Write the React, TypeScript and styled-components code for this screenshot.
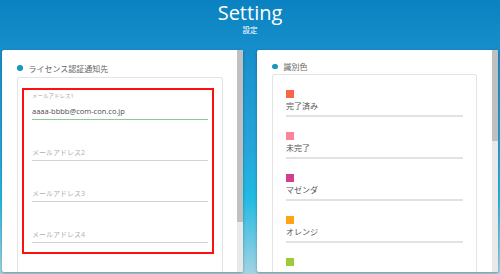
import React from 'react'
import styled, { createGlobalStyle } from 'styled-components'

const GlobalStyle = createGlobalStyle`
	html, body {
		margin: 0;
		padding: 0;
	}
	body {
		font-family: 'Open Sans', 'Noto Sans CJK JP', sans-serif;
		background: #1b90cc;
	}
`

const emails = [
	{ label: 'メールアドレス1', value: 'aaaa-bbbb@com-con.co.jp' },
	{ label: 'メールアドレス2', value: '' },
	{ label: 'メールアドレス3', value: '' },
	{ label: 'メールアドレス4', value: '' },
]

// the last entry's name sits below the fold, only its swatch shows
const colors = [
	{ name: '完了済み', color: '#fa6648' },
	{ name: '未完了', color: '#fb8497' },
	{ name: 'マゼンダ', color: '#d33f8c' },
	{ name: 'オレンジ', color: '#fda515' },
	{ name: '', color: '#9dcb3c' },
]

export default function App() {
	return (
		<Page>
			<GlobalStyle />
			<Header>
				<Title>Setting</Title>
				<SubTitle>設定</SubTitle>
			</Header>
			<Cards>
				<Card>
					<CardBody $padRight={14}>
						<SectionTitle>ライセンス認証通知先</SectionTitle>
						<InnerBox>
							<Highlight>
								{emails.map((e, i) => (
									<Field key={i} $first={i === 0} $active={!!e.value}>
										<FieldLabel>{e.value ? e.label : ''}</FieldLabel>
										<FieldInput
											readOnly
											defaultValue={e.value}
											placeholder={e.label}
										/>
									</Field>
								))}
							</Highlight>
						</InnerBox>
					</CardBody>
					<ScrollTrack>
						<ScrollThumb $height={172} />
					</ScrollTrack>
				</Card>
				<Card>
					<CardBody $padRight={15}>
						<SectionTitle>識別色</SectionTitle>
						<InnerBox $padX={13}>
							{colors.map((c, i) => (
								<ColorItem key={i}>
									<Swatch $color={c.color} />
									<ColorName>{c.name}</ColorName>
								</ColorItem>
							))}
						</InnerBox>
					</CardBody>
					<ScrollTrack>
						<ScrollThumb $height={91} />
					</ScrollTrack>
				</Card>
			</Cards>
		</Page>
	)
}

const Page = styled.div`
	width: 500px;
	height: 274px;
	overflow: hidden;
	background: linear-gradient(
		to bottom,
		#0a82c1 0%,
		#1b93cf 25%,
		#25a6db 55%,
		#21bae2 72%,
		#a3d3e3 100%
	);
`

const Header = styled.div`
	height: 50px;
	padding-top: 1px;
	box-sizing: border-box;
	display: flex;
	flex-direction: column;
	align-items: center;
	color: #fff;
`

const Title = styled.div`
	font-size: 20px;
	line-height: 24px;
`

const SubTitle = styled.div`
	font-size: 7.5px;
	line-height: 10px;
`

const Cards = styled.div`
	display: flex;
	gap: 14px;
	padding: 0 2px;
`

const Card = styled.div`
	width: 241px;
	height: 222px;
	background: #fff;
	border-radius: 2px;
	box-shadow: 0 1px 3px rgba(0, 0, 0, 0.3);
	display: flex;
	overflow: hidden;
`

const CardBody = styled.div<{ $padRight: number }>`
	flex: 1;
	padding: 11px ${(p) => p.$padRight}px 0 15px;
	display: flex;
	flex-direction: column;
`

const SectionTitle = styled.div`
	display: flex;
	align-items: center;
	gap: 6px;
	height: 14px;
	margin-bottom: 2px;
	font-size: 8px;
	color: #666;

	&::before {
		content: '';
		width: 5.5px;
		height: 5.5px;
		border-radius: 50%;
		background: #1798bf;
	}
`

const InnerBox = styled.div<{ $padX?: number }>`
	flex: 1;
	border: 1px solid #e4e4e4;
	border-bottom: none;
	border-radius: 3px 3px 0 0;
	padding: 0 ${(p) => p.$padX ?? 0}px;
`

const Highlight = styled.div`
	margin: 10px 8px 0 4px;
	border: 2px solid #ff1010;
	padding: 0 4px 9px 8px;
`

const Field = styled.div<{ $first: boolean; $active: boolean }>`
	margin-top: ${(p) => (p.$first ? 0 : 11)}px;
	border-bottom: 1px solid ${(p) => (p.$active ? '#8dcb8f' : '#d2d2d2')};
	display: flex;
	flex-direction: column;
`

const FieldLabel = styled.div`
	height: 12px;
	line-height: 12px;
	font-size: 5.5px;
	color: #a8a8a8;
`

const FieldInput = styled.input`
	height: 17px;
	padding: 0;
	margin: 0;
	border: none;
	outline: none;
	background: transparent;
	font-family: 'Open Sans', 'Noto Sans CJK JP', sans-serif;
	font-size: 7.5px;
	color: #4a4a4a;

	&::placeholder {
		font-size: 7px;
		color: #b0b0b0;
	}
`

const ColorItem = styled.div`
	padding-top: 15px;
	padding-bottom: 1px;
	border-bottom: 2px solid #e2e2e2;
`

const Swatch = styled.div<{ $color: string }>`
	width: 8px;
	height: 8px;
	background: ${(p) => p.$color};
`

const ColorName = styled.div`
	height: 16px;
	line-height: 16px;
	font-size: 8px;
	color: #555;
`

const ScrollTrack = styled.div`
	width: 6px;
	flex-shrink: 0;
	background: #e9e9e9;
`

const ScrollThumb = styled.div<{ $height: number }>`
	height: ${(p) => p.$height}px;
	background: #c0c0c0;
`
